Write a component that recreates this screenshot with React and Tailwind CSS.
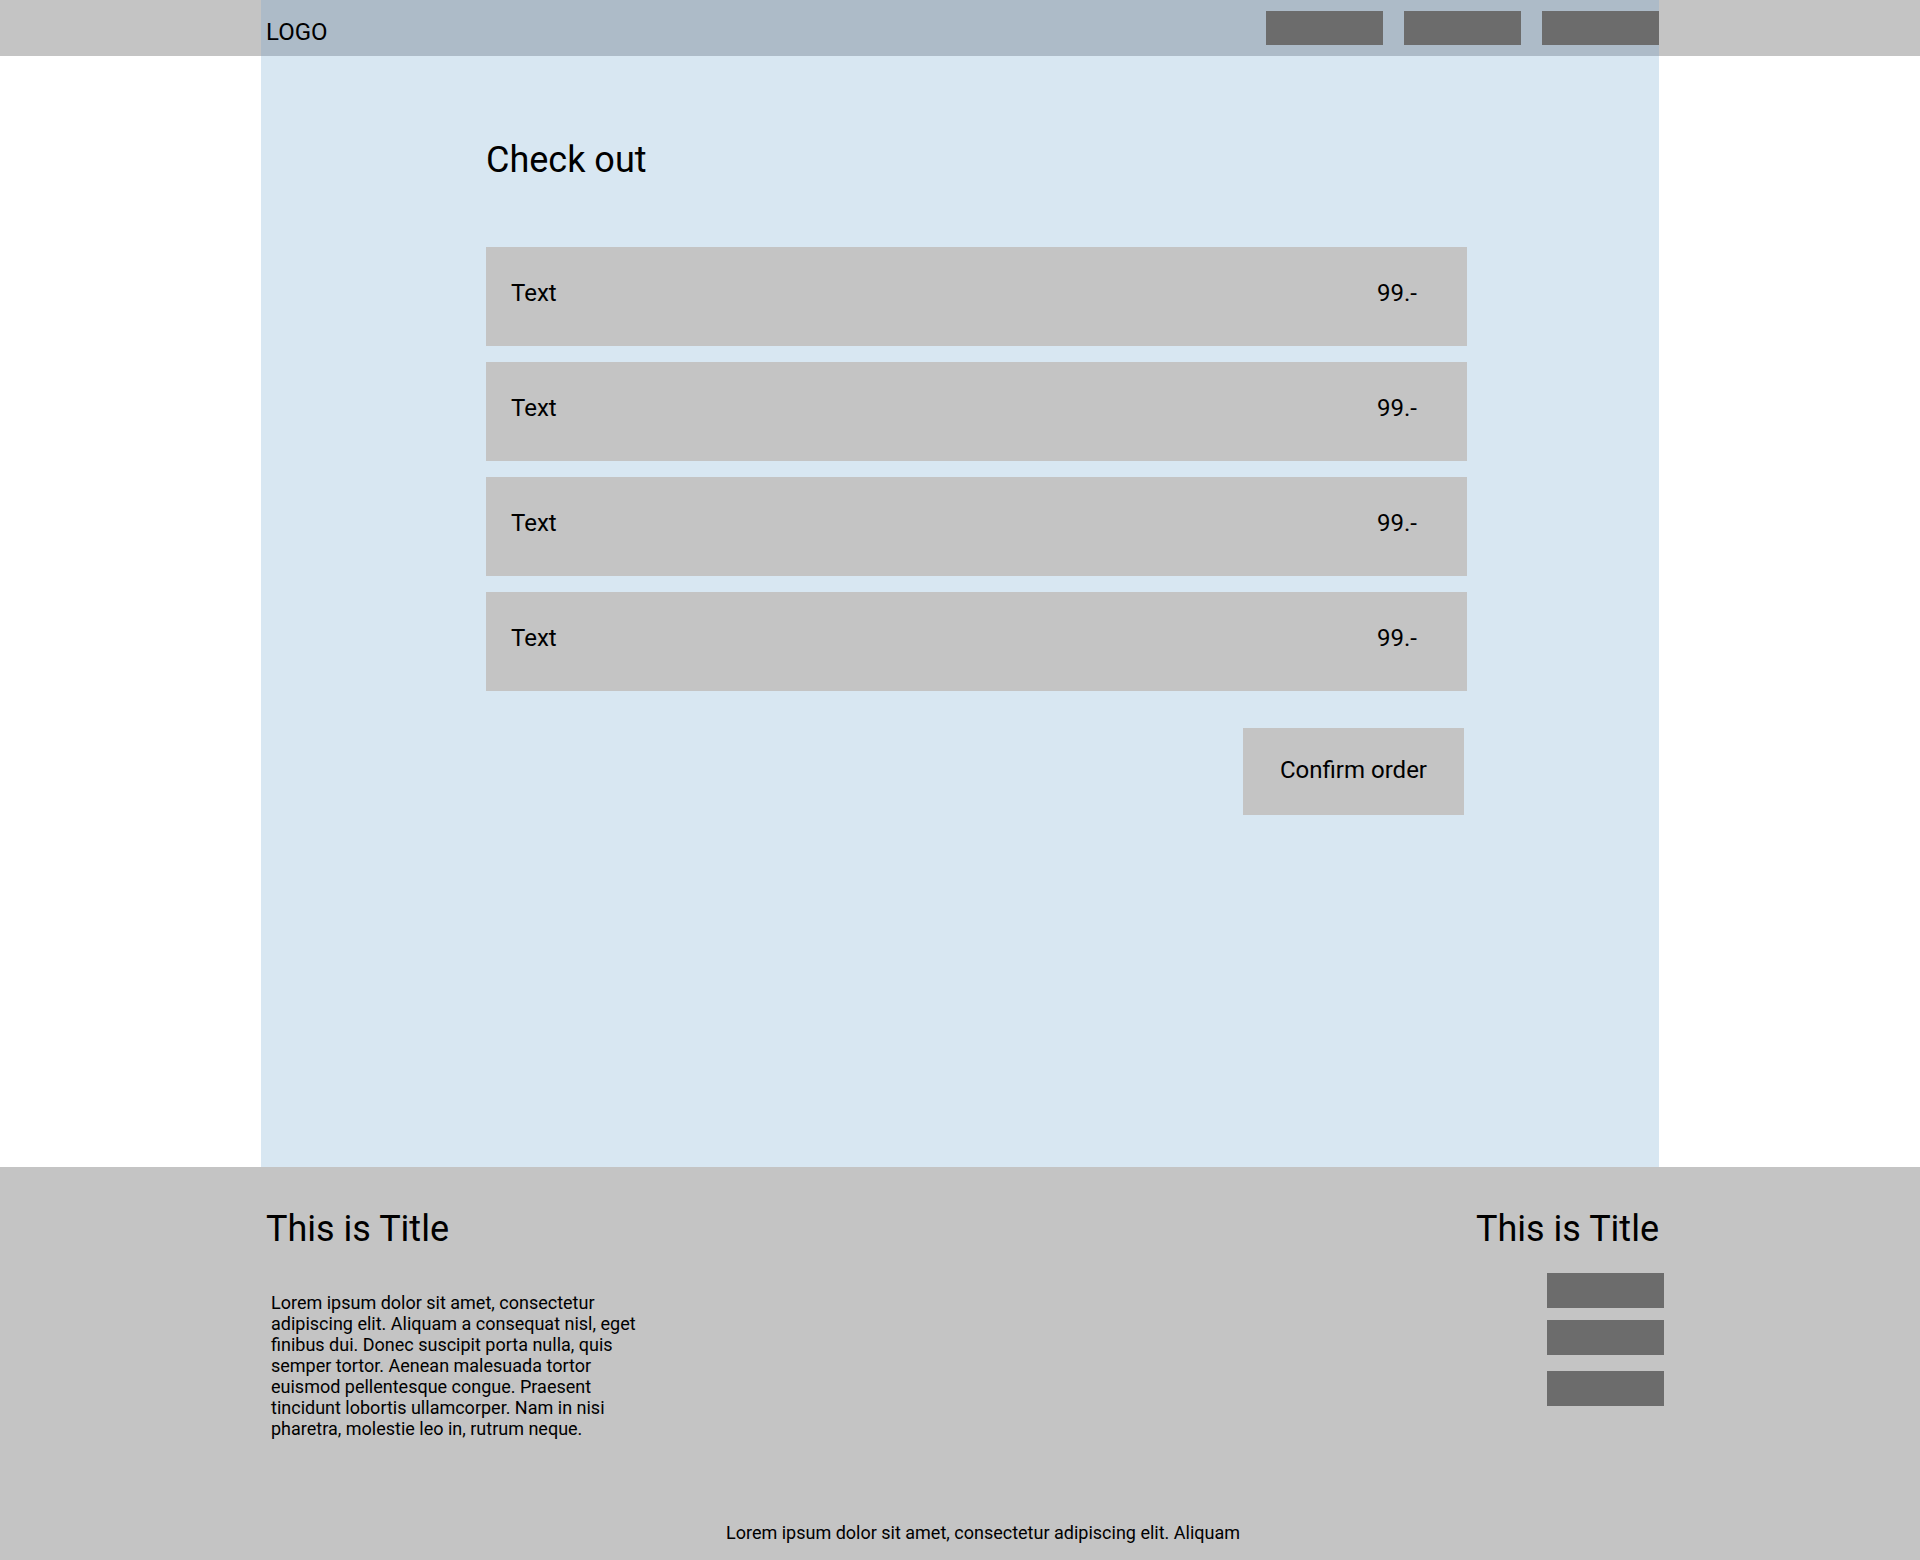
export default function App() {
  const items = [
    { name: "Text", price: "99.-" },
    { name: "Text", price: "99.-" },
    { name: "Text", price: "99.-" },
    { name: "Text", price: "99.-" },
  ];

  return (
    <div className="min-h-[1560px] bg-white text-black font-['Roboto',sans-serif]">
      {/* header */}
      <header className="h-14 bg-[#c4c4c4]">
        <div className="mx-auto flex h-full w-[1398px] justify-between bg-[#adbbc8]">
          <div className="pl-[5px] pt-[18px] text-[24px] leading-[28px]">LOGO</div>
          <nav className="flex gap-[21px] pt-[11px]">
            <div className="h-[34px] w-[117px] bg-[#6c6c6c]" />
            <div className="h-[34px] w-[117px] bg-[#6c6c6c]" />
            <div className="h-[34px] w-[117px] bg-[#6c6c6c]" />
          </nav>
        </div>
      </header>

      {/* main */}
      <main>
        <div className="mx-auto h-[1111px] w-[1398px] bg-[#d8e7f2] pl-[225px] pt-[83px]">
          <h1 className="text-[36px] leading-[42px]">Check out</h1>
          <div className="mt-[66px] flex w-[981px] flex-col items-end">
            <div className="flex w-full flex-col gap-4">
              {items.map((item, i) => (
                <div
                  key={i}
                  className="flex h-[99px] items-start justify-between bg-[#c4c4c4] pl-[25px] pr-[50px] pt-8 text-[24px] leading-[28px]"
                >
                  <span>{item.name}</span>
                  <span>{item.price}</span>
                </div>
              ))}
            </div>
            <button className="mr-[3px] mt-[37px] flex h-[87px] w-[221px] items-center justify-center bg-[#c4c4c4] pb-[4px] text-[24px] leading-[28px]">
              Confirm order
            </button>
          </div>
        </div>
      </main>

      {/* footer */}
      <footer className="h-[393px] bg-[#c4c4c4]">
        <div className="mx-auto w-[1398px] pt-[41px]">
          <div className="flex justify-between">
            <div>
              <h2 className="pl-[5px] text-[36px] leading-[42px]">This is Title</h2>
              <p className="ml-[10px] mt-[42px] w-[380px] text-[18px] leading-[21px]">
                Lorem ipsum dolor sit amet, consectetur adipiscing elit. Aliquam a consequat nisl, eget
                finibus dui. Donec suscipit porta nulla, quis semper tortor. Aenean malesuada tortor
                euismod pellentesque congue. Praesent tincidunt lobortis ullamcorper. Nam in nisi
                pharetra, molestie leo in, rutrum neque.
              </p>
            </div>
            <div className="flex flex-col items-end">
              <h2 className="text-[36px] leading-[42px]">This is Title</h2>
              <div className="-mr-[5px] mt-[23px] h-[35px] w-[117px] bg-[#6c6c6c]" />
              <div className="-mr-[5px] mt-[12px] h-[35px] w-[117px] bg-[#6c6c6c]" />
              <div className="-mr-[5px] mt-[16px] h-[35px] w-[117px] bg-[#6c6c6c]" />
            </div>
          </div>
          <p className="mt-[83px] pl-[465px] text-[18px] leading-[21px]">
            Lorem ipsum dolor sit amet, consectetur adipiscing elit. Aliquam
          </p>
        </div>
      </footer>
    </div>
  );
}
